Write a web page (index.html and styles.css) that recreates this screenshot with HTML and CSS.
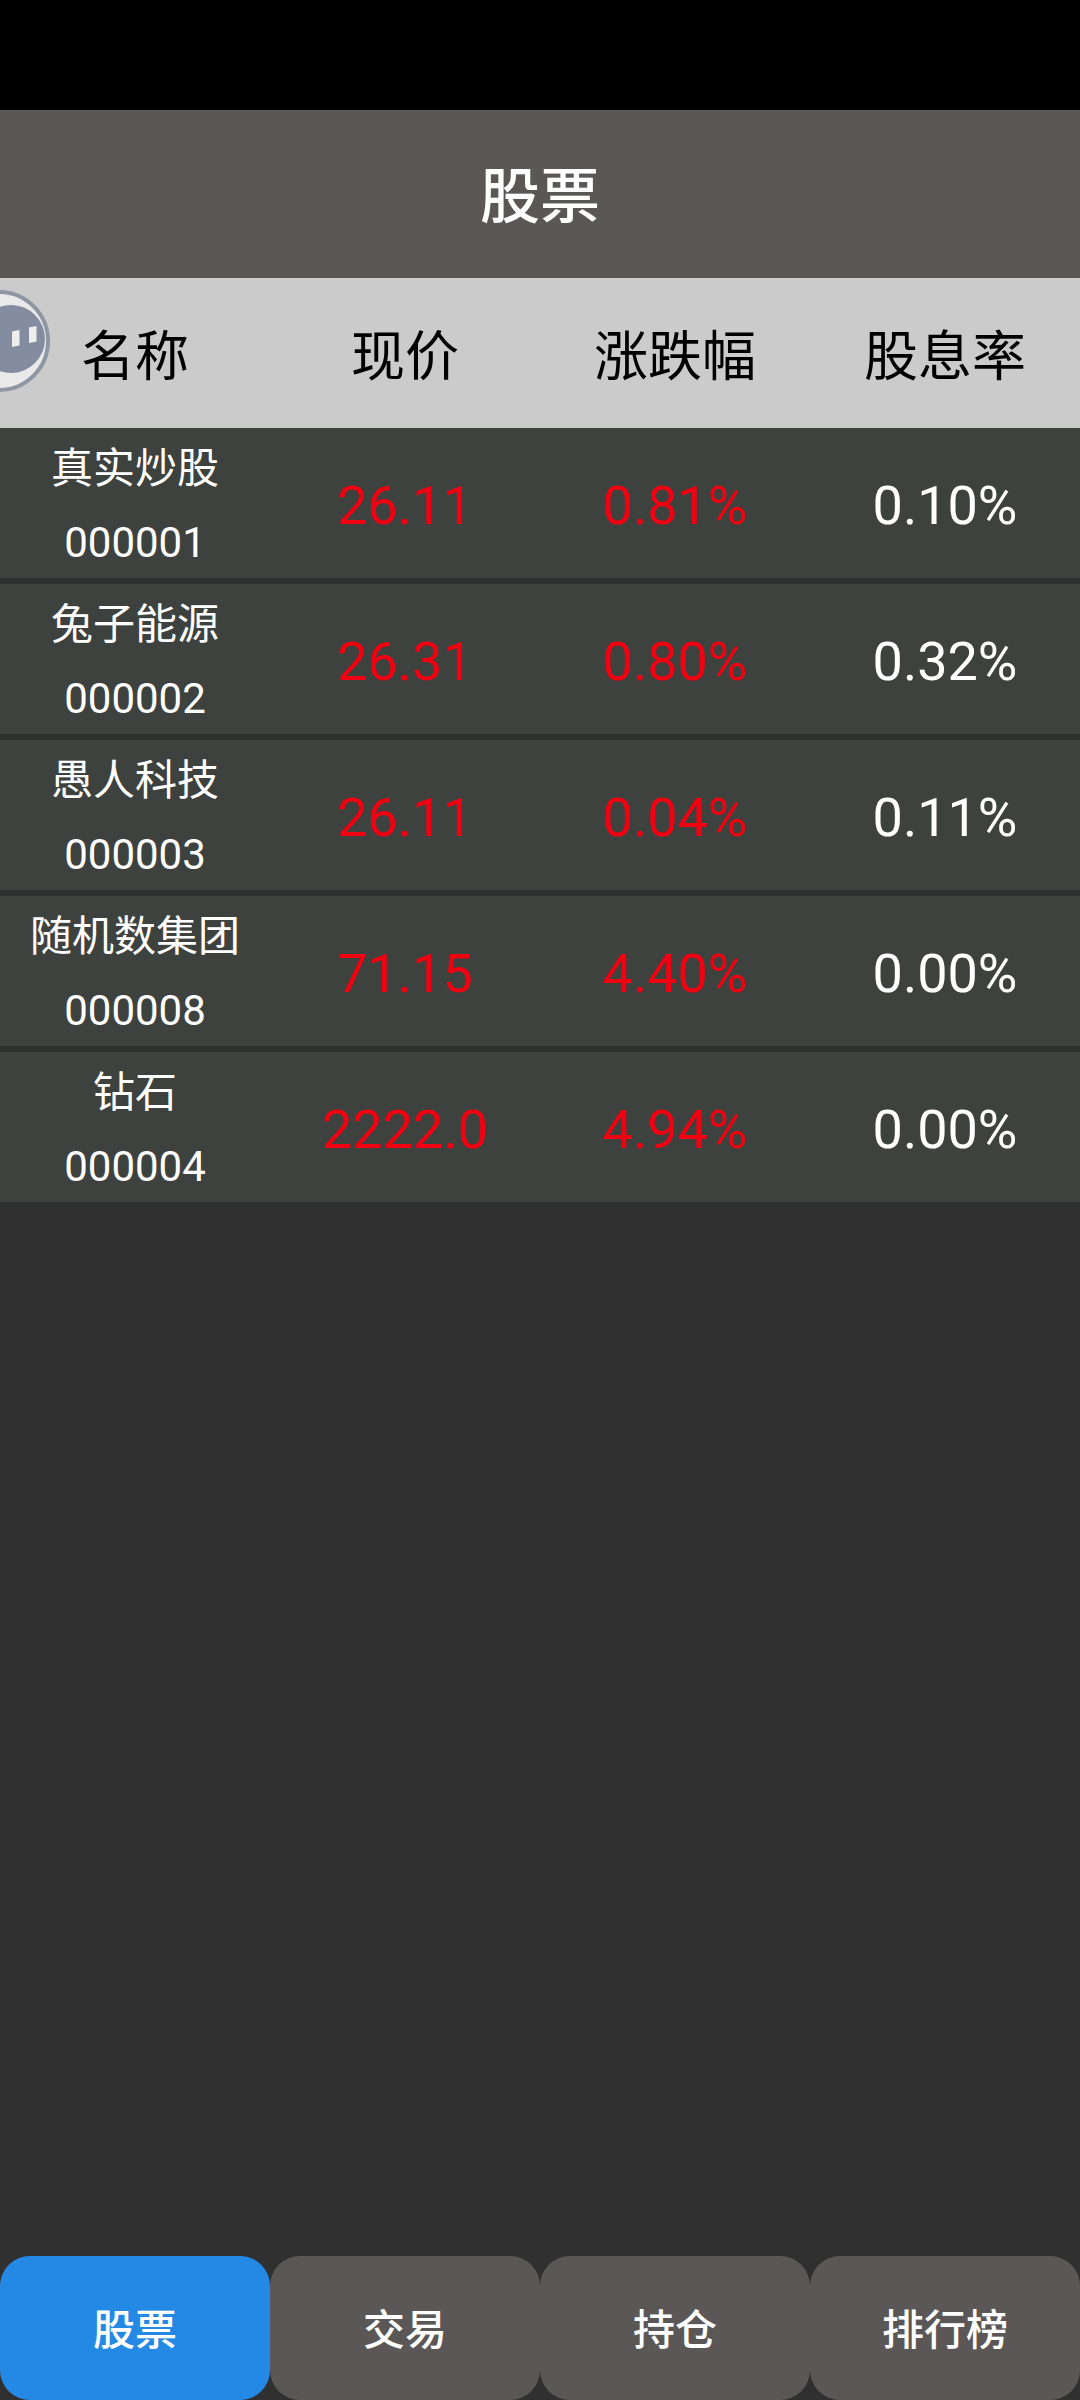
FILE: index.html
```html
<!DOCTYPE html>
<html lang="zh-CN">
<head>
<meta charset="utf-8">
<title>股票</title>
<link rel="stylesheet" href="styles.css">
</head>
<body>
<div class="page">
  <div class="statusbar"></div>
  <header class="title"><h1>股票</h1></header>
  <div class="row head">
    <div>名称</div><div>现价</div><div>涨跌幅</div><div>股息率</div>
  </div>
  <main class="list">
    <div class="row item"><div class="name"><span>真实炒股</span><span>000001</span></div><div class="up">26.11</div><div class="up">0.81%</div><div>0.10%</div></div>
    <div class="row item"><div class="name"><span>兔子能源</span><span>000002</span></div><div class="up">26.31</div><div class="up">0.80%</div><div>0.32%</div></div>
    <div class="row item"><div class="name"><span>愚人科技</span><span>000003</span></div><div class="up">26.11</div><div class="up">0.04%</div><div>0.11%</div></div>
    <div class="row item"><div class="name"><span>随机数集团</span><span>000008</span></div><div class="up">71.15</div><div class="up">4.40%</div><div>0.00%</div></div>
    <div class="row item"><div class="name"><span>钻石</span><span>000004</span></div><div class="up">2222.0</div><div class="up">4.94%</div><div>0.00%</div></div>
  </main>
  <nav class="tabs">
    <div class="tab active">股票</div><div class="tab">交易</div><div class="tab">持仓</div><div class="tab">排行榜</div>
  </nav>
  <svg class="float" width="52" height="104" viewBox="0 0 52 104" aria-hidden="true">
    <circle cx="-1" cy="52" r="49" fill="#e9e9ea" stroke="#8e96a4" stroke-width="4"/>
    <circle cx="11" cy="50" r="34" fill="#848da0"/>
    <path d="M12 42.500l7.500-1.500v15.500l-7.500 1.500z M29 38.500l7.500-1.500v15.500l-7.500 1.500z" fill="#eeeeec"/>
  </svg>
</div>
</body>
</html>
```
FILE: styles.css
```css
* { box-sizing: border-box; }
html, body { margin: 0; padding: 0; }
body { font-family: Roboto, "Noto Sans CJK SC", sans-serif; background: #303030; }
.page { position: relative; width: 1080px; height: 2400px; display: flex; flex-direction: column; overflow: hidden; background: #303030; }
.statusbar { height: 110px; background: #000; flex: none; }
.title { height: 168px; flex: none; background: #5b5757; display: flex; align-items: center; justify-content: center; padding-top: 7px; }
.title h1 { margin: 0; font-size: 60px; font-weight: 500; color: #fff; line-height: 1; }
.row { display: grid; grid-template-columns: repeat(4, 270px); align-items: center; text-align: center; }
.head { height: 150px; flex: none; background: #cbcbcb; color: #000; font-size: 54px; padding-bottom: 2px; }
.list { flex: 1; display: flex; flex-direction: column; gap: 6px; }
.item { height: 150px; background: #3e423f; color: #fff; font-size: 54px; padding-top: 2px; }
.up { color: #f00010; }
.name { display: flex; flex-direction: column; align-items: center; font-size: 42px; line-height: 74px; margin-top: 2px; }
.tabs { height: 144px; flex: none; display: grid; grid-template-columns: repeat(4, 270px); }
.tab { background: #5b5757; color: #fff; font-size: 42px; font-weight: 500; border-radius: 30px; display: flex; align-items: center; justify-content: center; padding-bottom: 3px; }
.tab.active { background: #2389e4; }
.float { position: absolute; left: 0; top: 289px; }
```
